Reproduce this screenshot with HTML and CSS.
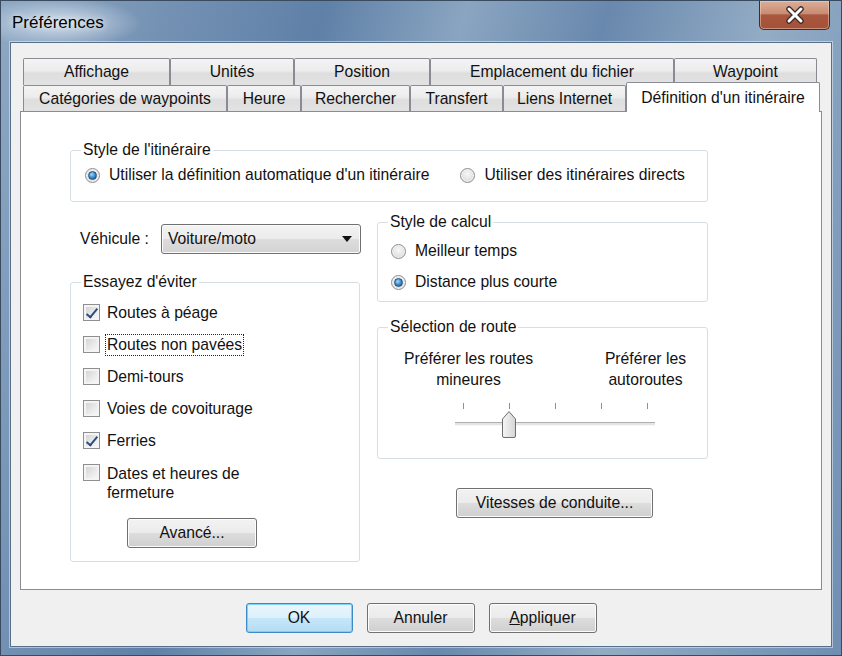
FILE: index.html
```html
<!DOCTYPE html>
<html lang="fr">

<head>
    <meta charset="UTF-8">
    <meta name="viewport" content="width=device-width, initial-scale=1.0">
    <title>Préférences</title>
    <link rel="stylesheet" href="styles.css">
</head>

<body>
    <div class="window">
        <div class="titlebar">
            <span class="title">Préférences</span>
            <button class="close" type="button" aria-label="Fermer">
                <svg width="20" height="18" viewBox="0 0 20 18">
                    <path d="M4 3 L16 15 M16 3 L4 15" stroke="#3b2a26" stroke-width="5.5" stroke-linecap="round" fill="none" />
                    <path d="M4 3 L16 15 M16 3 L4 15" stroke="#fff" stroke-width="3" stroke-linecap="round" fill="none" />
                </svg>
            </button>
        </div>

        <div class="client">
            <!-- onglets sur deux rangées -->
            <div class="tabs">
                <div class="tab-row row-back">
                    <div class="tab tab-affichage">Affichage</div>
                    <div class="tab tab-unites">Unités</div>
                    <div class="tab tab-position">Position</div>
                    <div class="tab tab-fichier">Emplacement du fichier</div>
                    <div class="tab tab-waypoint">Waypoint</div>
                </div>
                <div class="tab-row row-front">
                    <div class="tab tab-categories">Catégories de waypoints</div>
                    <div class="tab tab-heure">Heure</div>
                    <div class="tab tab-rechercher">Rechercher</div>
                    <div class="tab tab-transfert">Transfert</div>
                    <div class="tab tab-liens">Liens Internet</div>
                    <div class="tab tab-itineraire active">Définition d'un itinéraire</div>
                </div>
            </div>

            <div class="panel">
                <fieldset class="group group-style">
                    <legend>Style de l'itinéraire</legend>
                    <div class="options">
                        <label class="option"><span class="radio on"></span>Utiliser la définition automatique d'un itinéraire</label>
                        <label class="option"><span class="radio"></span>Utiliser des itinéraires directs</label>
                    </div>
                </fieldset>

                <div class="columns">
                    <div class="col-left">
                        <div class="vehicle">
                            <span class="vehicle-label">Véhicule :</span>
                            <div class="combo">
                                <span>Voiture/moto</span>
                                <span class="arrow"></span>
                            </div>
                        </div>

                        <fieldset class="group group-avoid">
                            <legend>Essayez d'éviter</legend>
                            <div class="checks">
                                <label class="check-row"><span class="check on"></span><span>Routes à péage</span></label>
                                <label class="check-row"><span class="check"></span><span class="focus">Routes non pavées</span></label>
                                <label class="check-row"><span class="check"></span><span>Demi-tours</span></label>
                                <label class="check-row"><span class="check"></span><span>Voies de covoiturage</span></label>
                                <label class="check-row"><span class="check on"></span><span>Ferries</span></label>
                                <label class="check-row two-lines"><span class="check"></span><span>Dates et heures de<br>fermeture</span></label>
                            </div>
                            <button class="btn btn-advanced" type="button">Avancé...</button>
                        </fieldset>
                    </div>

                    <div class="col-right">
                        <fieldset class="group group-calc">
                            <legend>Style de calcul</legend>
                            <div class="stack">
                                <label class="option"><span class="radio"></span>Meilleur temps</label>
                                <label class="option"><span class="radio on"></span>Distance plus courte</label>
                            </div>
                        </fieldset>

                        <fieldset class="group group-route">
                            <legend>Sélection de route</legend>
                            <div class="route-labels">
                                <span>Préférer les routes<br>mineures</span>
                                <span>Préférer les<br>autoroutes</span>
                            </div>
                            <div class="slider">
                                <div class="ticks">
                                    <i></i><i></i><i></i><i></i><i></i>
                                </div>
                                <div class="track"></div>
                                <svg class="thumb" width="16" height="29" viewBox="0 0 16 29">
                                    <defs>
                                        <linearGradient id="thumbFill" x1="0" y1="0" x2="1" y2="0">
                                            <stop offset="0" stop-color="#f6f6f6" />
                                            <stop offset="1" stop-color="#d4d4d4" />
                                        </linearGradient>
                                    </defs>
                                    <path d="M1.5 26 Q1.5 27.5 3 27.5 H13 Q14.5 27.5 14.5 26 V9 L8 1.5 L1.5 9 Z" fill="url(#thumbFill)" stroke="#6e6e6e" stroke-linejoin="round" />
                                </svg>
                            </div>
                        </fieldset>

                        <button class="btn btn-speeds" type="button">Vitesses de conduite...</button>
                    </div>
                </div>
            </div>

            <div class="actions">
                <button class="btn btn-default btn-ok" type="button">OK</button>
                <button class="btn btn-action" type="button">Annuler</button>
                <button class="btn btn-action" type="button"><u>A</u>ppliquer</button>
            </div>
        </div>
    </div>
</body>

</html>
```

FILE: styles.css
```css
* {
    box-sizing: border-box;
}

body {
    margin: 0;
    width: 842px;
    height: 656px;
    overflow: hidden;
    font-family: 'Liberation Sans', Arial, sans-serif;
    font-size: 15.7px;
    color: #111;
}

/* cadre de la fenêtre */
.window {
    width: 842px;
    height: 656px;
    border: 1px solid #3a4b60;
    display: flex;
    flex-direction: column;
    background:
        radial-gradient(ellipse 110px 34px at 58px 22px, rgba(235, 242, 248, 0.75), rgba(235, 242, 248, 0) 75%),
        linear-gradient(105deg, #8ea8c3 0%, #7592b4 16%, #5f80a7 32%, #8aa5c1 46%, #6988ad 60%, #93acc5 76%, #6f8eb2 100%);
}

.titlebar {
    height: 41px;
    display: flex;
    justify-content: space-between;
    align-items: flex-start;
    padding-left: 11px;
}

.title {
    margin-top: 12px;
    font-size: 17px;
    line-height: 20px;
    color: #000;
    text-shadow: 0 0 6px rgba(255, 255, 255, 0.9);
}

.close {
    width: 71px;
    height: 29px;
    margin-right: 11px;
    padding: 0;
    border: 1px solid #4a2a20;
    border-top: none;
    border-radius: 0 0 5px 5px;
    background: linear-gradient(#dcae98 0%, #c98c73 45%, #a9573e 50%, #a35139 100%);
    box-shadow: inset 0 0 0 1px rgba(255, 220, 200, 0.45);
    display: flex;
    justify-content: center;
    align-items: center;
}

.client {
    margin: 0 9px;
    height: 605px;
    background: #f0f0f0;
    border: 1px solid #56708c;
    box-shadow: 0 0 0 1px rgba(255, 255, 255, 0.45);
    padding-top: 15px;
}

/* onglets */
.tabs {
    padding-left: 12px;
}

.tab-row {
    display: flex;
}

.row-back {
    height: 27px;
}

.row-front {
    height: 26px;
    align-items: flex-end;
}

.tab {
    height: 100%;
    flex: none;
    border: 1px solid #898c95;
    border-bottom: none;
    border-radius: 2px 2px 0 0;
    background: linear-gradient(#f4f4f4 0%, #ececec 45%, #dedede 55%, #e2e2e2 100%);
    display: flex;
    justify-content: center;
    align-items: center;
    white-space: nowrap;
}

.tab-affichage { width: 147px; }
.tab-unites { width: 124px; }
.tab-position { width: 136px; }
.tab-fichier { width: 244px; }
.tab-waypoint { width: 143px; }
.tab-categories { width: 204px; }
.tab-heure { width: 74px; }
.tab-rechercher { width: 109px; }
.tab-transfert { width: 93px; }
.tab-liens { width: 123px; }
.tab-itineraire { width: 194px; }

.tab.active {
    height: 30px;
    margin-bottom: -1px;
    position: relative;
    z-index: 1;
    background: #fff;
}

.panel {
    margin: 0 9px;
    height: 479px;
    border: 1px solid #898c95;
    background: #fff;
    padding: 29px 0 0 49px;
}

/* cadres de groupe */
.group {
    margin: 0;
    padding: 0;
    min-inline-size: 0;
    border: 1px solid #d5dfe5;
    border-radius: 3px;
}

.group legend {
    margin-left: 10px;
    padding: 0 2px;
    line-height: 18px;
}

.group-style {
    width: 638px;
}

.options {
    display: flex;
    gap: 31px;
    padding: 7px 0 17px 14px;
}

.option {
    display: flex;
    align-items: center;
    gap: 9px;
    line-height: 18px;
    white-space: nowrap;
}

.radio {
    width: 15px;
    height: 15px;
    flex: none;
    border-radius: 50%;
    border: 1px solid #8c8e90;
    background: radial-gradient(circle at 50% 40%, #f7f7f7 0%, #e2e2e2 60%, #cfcfcf 100%);
    box-shadow: inset 0 0 0 1px #f4f4f4;
    display: flex;
    justify-content: center;
    align-items: center;
}

.radio.on::after {
    content: '';
    width: 7px;
    height: 7px;
    border-radius: 50%;
    background: radial-gradient(circle at 40% 35%, #a9dcf8 0%, #3e93d4 45%, #1a4f87 100%);
    border: 1px solid #28507a;
}

.columns {
    display: flex;
    gap: 17px;
    margin-top: 11px;
}

.col-left {
    width: 290px;
}

.col-right {
    width: 331px;
}

.vehicle {
    margin-top: 11px;
    height: 30px;
    display: flex;
    align-items: center;
}

.vehicle-label {
    padding-left: 10px;
}

.combo {
    width: 200px;
    height: 30px;
    margin-left: auto;
    margin-right: -1px;
    border: 1px solid #707070;
    border-radius: 3px;
    background: linear-gradient(#f3f3f3 0%, #ebebeb 50%, #dddddd 50%, #d3d3d3 100%);
    box-shadow: inset 0 0 0 1px #fbfbfb;
    display: flex;
    align-items: center;
    justify-content: space-between;
    padding: 0 8px 0 6px;
}

.arrow {
    width: 0;
    height: 0;
    border-left: 5px solid transparent;
    border-right: 5px solid transparent;
    border-top: 6px solid #111;
}

.group-avoid {
    margin-top: 19px;
    padding: 0 0 13px 0;
}

.checks {
    padding: 13px 0 0 12px;
    display: flex;
    flex-direction: column;
    gap: 14px;
}

.check-row {
    display: flex;
    align-items: flex-start;
    gap: 7px;
    line-height: 18px;
}

.two-lines {
    line-height: 19px;
}

.check {
    width: 17px;
    height: 17px;
    flex: none;
    border: 1px solid #8f8f8f;
    background: linear-gradient(135deg, #cfcfcf 0%, #e9e9e9 55%, #fbfbfb 100%);
    box-shadow: inset 0 0 0 2px #f4f4f4;
    position: relative;
}

.check.on::after {
    content: '';
    position: absolute;
    left: 5px;
    top: 1px;
    width: 4px;
    height: 10px;
    border-right: 2.5px solid #2a4f7d;
    border-bottom: 2.5px solid #2a4f7d;
    transform: rotate(40deg);
}

.focus {
    outline: 1px dotted #222;
    outline-offset: 1px;
}

.btn {
    height: 30px;
    border: 1px solid #707070;
    border-radius: 3px;
    background: linear-gradient(#f2f2f2 0%, #ebebeb 50%, #dddddd 50%, #cfcfcf 100%);
    box-shadow: inset 0 0 0 1px #fcfcfc;
    font-family: inherit;
    font-size: inherit;
    color: #111;
    padding: 0;
}

.btn-advanced {
    display: block;
    width: 130px;
    margin: 16px 0 0 56px;
}

.group-calc .stack {
    display: flex;
    flex-direction: column;
    gap: 13px;
    padding: 11px 0 10px 13px;
}

.group-route {
    margin-top: 16px;
    padding-bottom: 20px;
}

.route-labels {
    display: flex;
    justify-content: space-between;
    padding: 12px 21px 0 26px;
    line-height: 21px;
    text-align: center;
}

.slider {
    position: relative;
    width: 200px;
    height: 35px;
    margin: 13px 0 0 77px;
}

.ticks {
    display: flex;
    justify-content: space-between;
    padding: 0 7px 0 8px;
}

.ticks i {
    width: 1px;
    height: 6px;
    background: #8f8f8f;
}

.track {
    margin-top: 13px;
    height: 4px;
    border-top: 1px solid #b0b0b0;
    border-bottom: 1px solid #f8f8f8;
    background: #e4e4e4;
}

/* curseur posé sur la glissière */
.thumb {
    position: absolute;
    left: 46px;
    top: 7px;
}

.btn-speeds {
    display: block;
    width: 197px;
    margin: 29px 0 0 79px;
}

.actions {
    margin-top: 13px;
    display: flex;
    justify-content: center;
    gap: 14px;
}

.btn-ok {
    width: 107px;
}

.btn-action {
    width: 108px;
}

.btn-default {
    border-color: #3c8ac8;
    background: linear-gradient(#eaf6fd 0%, #dcf0fb 50%, #c6e7f9 50%, #b4dcf3 100%);
    box-shadow: inset 0 0 0 1px #7ed0f6;
}
```
